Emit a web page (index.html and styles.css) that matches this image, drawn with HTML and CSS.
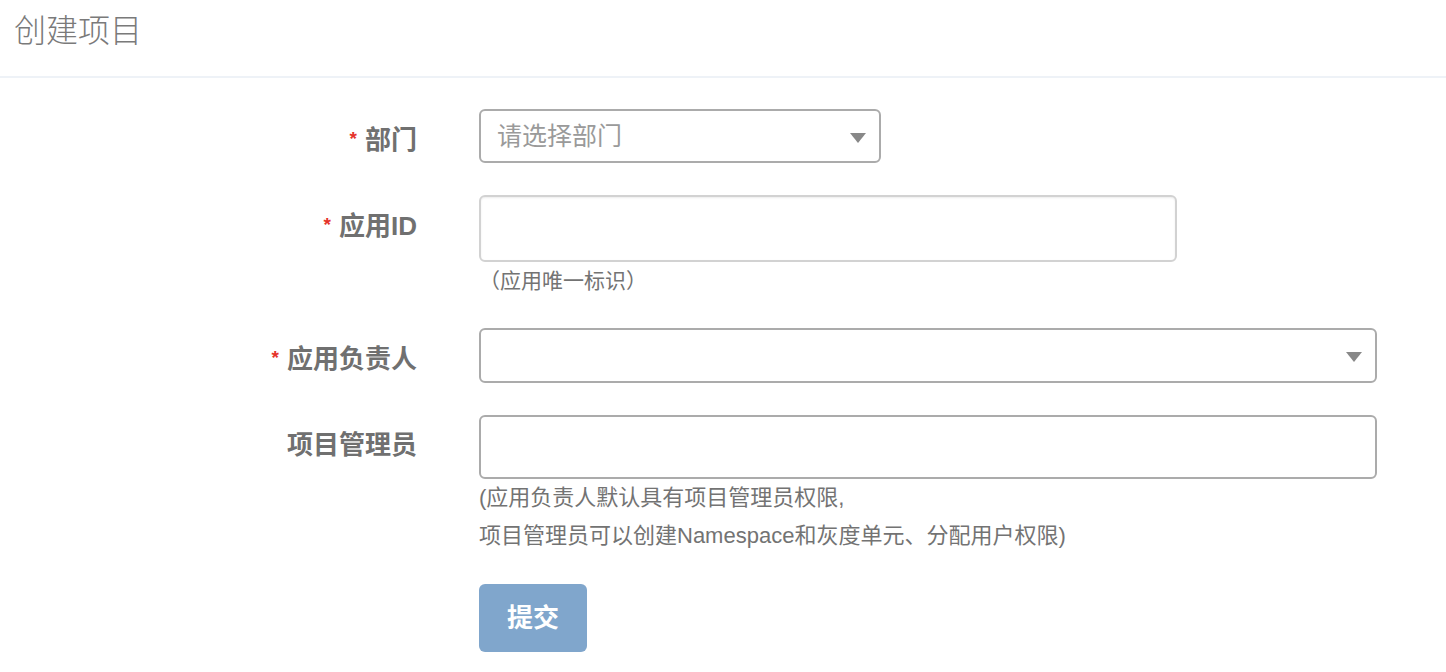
FILE: index.html
```html
<!DOCTYPE html>
<html lang="zh-CN">
<head>
<meta charset="utf-8">
<title>创建项目</title>
<link rel="stylesheet" href="styles.css">
</head>
<body>
<header class="header">
  <h1 class="title">创建项目</h1>
</header>
<form class="form">
  <div class="row">
    <label class="label"><span class="star">*</span>部门</label>
    <div class="control">
      <div class="select select-short">
        <span class="placeholder">请选择部门</span>
        <span class="arrow"></span>
      </div>
    </div>
  </div>
  <div class="row">
    <label class="label"><span class="star">*</span>应用ID</label>
    <div class="control">
      <div class="input input-mid"></div>
      <div class="help help-one">（应用唯一标识）</div>
    </div>
  </div>
  <div class="row">
    <label class="label"><span class="star">*</span>应用负责人</label>
    <div class="control">
      <div class="select select-wide">
        <span class="placeholder"></span>
        <span class="arrow"></span>
      </div>
    </div>
  </div>
  <div class="row">
    <label class="label">项目管理员</label>
    <div class="control">
      <div class="input input-wide"></div>
      <div class="help help-two">(应用负责人默认具有项目管理员权限,<br>项目管理员可以创建Namespace和灰度单元、分配用户权限)</div>
      <button type="button" class="btn">提交</button>
    </div>
  </div>
</form>
</body>
</html>
```

FILE: styles.css
```css
body {
  margin: 0;
  background: #fff;
  font-family: "Liberation Sans", "Noto Sans CJK SC", sans-serif;
  color: #333;
}

.header {
  height: 78px;
  box-sizing: border-box;
  padding: 10px 0 0 14px;
  border-bottom: 2px solid #eef2f7;
}

.title {
  margin: 0;
  font-size: 32px;
  line-height: 42px;
  font-weight: 300;
  color: #7a7a7a;
}

.form {
  padding-top: 31px;
}

.row {
  display: flex;
  margin-bottom: 32px;
}

.row-tight {
  margin-bottom: 33px;
}

.label {
  width: 417px;
  flex: none;
  box-sizing: border-box;
  padding-top: 15px;
  text-align: right;
  font-size: 26px;
  line-height: 30px;
  font-weight: bold;
  color: #707070;
}

.star {
  color: #e5332a;
  font-size: 19px;
  margin-right: 8px;
  vertical-align: 4px;
}

.control {
  margin-left: 62px;
}

.select {
  display: flex;
  align-items: center;
  justify-content: space-between;
  box-sizing: border-box;
  height: 54px;
  padding: 0 13px 0 16px;
  border: 2px solid #ababab;
  border-radius: 6px;
  background: #fff;
}

.select-short {
  width: 402px;
}

.select-wide {
  width: 898px;
  height: 55px;
}

.placeholder {
  font-size: 25px;
  line-height: 30px;
  color: #9a9a9a;
}

.arrow {
  width: 0;
  height: 0;
  margin-top: 3px;
  border-left: 8px solid transparent;
  border-right: 8px solid transparent;
  border-top: 10px solid #888;
}

.input {
  box-sizing: border-box;
  border-radius: 6px;
  background: #fff;
}

.input-mid {
  width: 698px;
  height: 67px;
  border: 2px solid #d2d2d2;
  box-shadow: inset 0 1px 2px rgba(0, 0, 0, 0.08);
}

.input-wide {
  width: 898px;
  height: 64px;
  border: 2px solid #ababab;
}

.help {
  color: #737373;
  font-size: 21px;
}

.help-one {
  margin-top: 4px;
  line-height: 30px;
}

.help-two {
  font-size: 22px;
  line-height: 38px;
}

.btn {
  display: block;
  margin-top: 29px;
  width: 108px;
  height: 68px;
  padding: 0;
  border: none;
  border-radius: 6px;
  background: #80a6cc;
  color: #fff;
  font-family: "Liberation Sans", "Noto Sans CJK SC", sans-serif;
  font-size: 26px;
  font-weight: bold;
  line-height: 36px;
}
```
